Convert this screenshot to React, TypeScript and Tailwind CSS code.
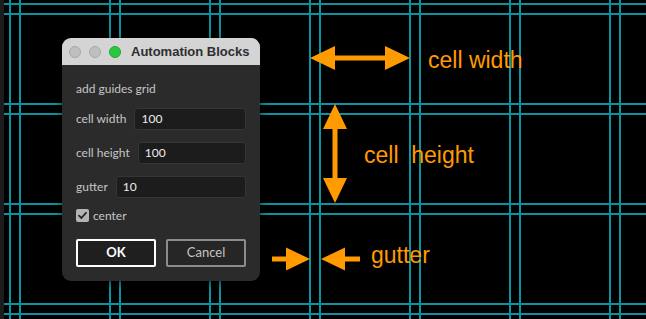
import React from "react";

const GRID_X = [10, 20, 110, 120, 210, 220, 310, 320, 410, 420, 510, 520, 610, 620];
const GRID_Y = [4, 14, 104, 114, 204, 214, 304, 314];

const ORANGE = "#ff9a00";

function GuidesCanvas() {
  return (
    <svg
      className="absolute inset-0"
      width={646}
      height={319}
      viewBox="0 0 646 319"
    >
      <rect x={0} y={0} width={4} height={319} fill="#1c1c1c" />
      {GRID_X.map((x) => (
        <rect key={"x" + x} x={x - 1} y={0} width={2} height={319} fill="#0c93a2" />
      ))}
      {GRID_Y.map((y) => (
        <rect key={"y" + y} x={4} y={y - 1} width={642} height={2} fill="#0c93a2" />
      ))}

      {/* cell width */}
      <polygon
        fill={ORANGE}
        points="310,58 335,46 335,55.5 385,55.5 385,46 410,58 385,70 385,60.5 335,60.5 335,70"
      />
      {/* cell height */}
      <polygon
        fill={ORANGE}
        points="335,104 347,129 337.5,129 337.5,178 347,178 335,203 323,178 332.5,178 332.5,129 323,129"
      />
      {/* gutter */}
      <polygon
        fill={ORANGE}
        points="272,256.5 286,256.5 286,247.5 310,259 286,270.5 286,261.5 272,261.5"
      />
      <polygon
        fill={ORANGE}
        points="321,259 345,247.5 345,256.5 360,256.5 360,261.5 345,261.5 345,270.5"
      />

      <g fill={ORANGE} fontFamily="'Liberation Sans', Arial, sans-serif" fontSize={23}>
        <text x={428} y={68}>cell width</text>
        <text x={364} y={163} className="whitespace-pre">
          cell  height
        </text>
        <text x={371} y={263}>gutter</text>
      </g>
    </svg>
  );
}

function Field({ label, value }: { label: string; value: string }) {
  return (
    <div className="flex h-[22px] items-center gap-[8px]">
      <span className="whitespace-nowrap">{label}</span>
      <div className="flex h-full flex-1 items-center rounded-[3px] border border-[#353535] bg-[#1c1c1c] pl-[6px] text-[12px] text-[#ececec]">
        {value}
      </div>
    </div>
  );
}

function Dialog() {
  return (
    <div className="relative flex h-[243px] w-[198px] flex-col overflow-hidden rounded-[9px] bg-[#2b2b2b] shadow-[0_2px_10px_rgba(0,0,0,0.6)]">
      <div className="flex h-[27px] shrink-0 items-center bg-[#d4d4d4] pl-[7px]">
        <div className="flex gap-[8px]">
          <span className="h-[12px] w-[12px] rounded-full border border-[#a9a9a9] bg-[#bfbfbf]" />
          <span className="h-[12px] w-[12px] rounded-full border border-[#a9a9a9] bg-[#bfbfbf]" />
          <span className="h-[12px] w-[12px] rounded-full border border-[#1fa533] bg-[#2ac840]" />
        </div>
        <span className="ml-[10px] font-['Liberation_Sans',Arial,sans-serif] text-[13px] font-bold text-[#2e2e2e]">
          Automation Blocks
        </span>
      </div>

      <div className="flex flex-col px-[14px] pt-[16px] font-['Lato','Open_Sans',sans-serif] text-[12px] text-[#c6c6c6]">
        <div className="h-[16px] leading-[16px]">add guides grid</div>
        <div className="mt-[11px] flex flex-col gap-[12px]">
          <Field label="cell width" value="100" />
          <Field label="cell height" value="100" />
          <Field label="gutter" value="10" />
        </div>
        <label className="mt-[11px] flex h-[13px] items-center gap-[4px]">
          <span className="flex h-[13px] w-[13px] items-center justify-center rounded-[2px] bg-[#b4b4b4]">
            <svg width="11" height="11" viewBox="0 0 11 11">
              <path
                d="M2 5.6 L4.4 8 L9 2.8"
                fill="none"
                stroke="#262626"
                strokeWidth="1.8"
                strokeLinecap="round"
                strokeLinejoin="round"
              />
            </svg>
          </span>
          <span>center</span>
        </label>
        <div className="mt-[17px] flex gap-[10px]">
          <button
            type="button"
            className="h-[28px] w-[80px] rounded-[2px] border-2 border-white bg-[#1f1f1f] text-[13px] font-bold text-white"
          >
            OK
          </button>
          <button
            type="button"
            className="h-[28px] w-[80px] rounded-[2px] border-2 border-[#8c8c8c] bg-[#262626] text-[13px] text-[#c4c4c4]"
          >
            Cancel
          </button>
        </div>
      </div>
    </div>
  );
}

export default function App() {
  return (
    <div className="relative h-[319px] w-[646px] overflow-hidden bg-black pl-[62px] pt-[38px]">
      <GuidesCanvas />
      <Dialog />
    </div>
  );
}
